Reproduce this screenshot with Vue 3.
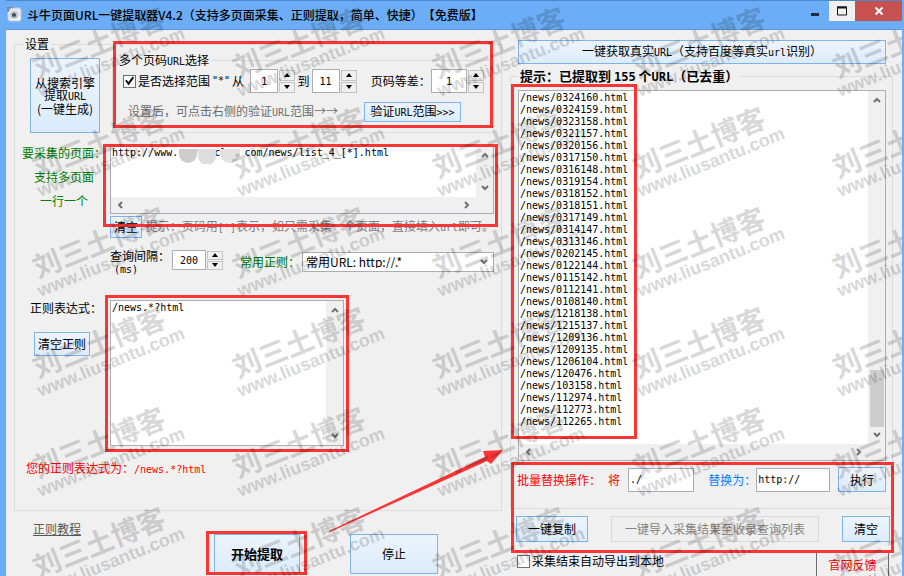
<script setup>
import { ref } from 'vue'

const useRange = ref(true)
const autoExport = ref(false)
const from = ref(1)
const to = ref(11)
const step = ref(1)
const interval = ref(200)
const pages = ref('http://www.r     cl   com/news/list_4_[*].html')
const pattern = ref('/news.*?html')
const preset = ref('any')
const search = ref('./')
const replacement = ref('http://')

const ids = [
  '0324160', '0324159', '0323158', '0321157', '0320156', '0317150', '0316148',
  '0319154', '0318152', '0318151', '0317149', '0314147', '0313146', '0202145',
  '0122144', '0115142', '0112141', '0108140', '1218138', '1215137', '1209136',
  '1209135', '1206104', '120476', '103158', '112974', '112773', '112265',
]
const results = ref(ids.map((id) => `/news/${id}.html`).join('\n'))
</script>

<template>
  <div class="window">
    <header class="titlebar">
      <svg class="app-icon" viewBox="0 0 15 15" aria-hidden="true">
        <rect x="1" y="1" width="13" height="13" rx="2" fill="#e4e8ee" stroke="#c3ccd8" />
        <path d="M0 0h7L2 5H0z" fill="#7e8a99" />
        <path d="M2 3l3-2M1 6l4-4" stroke="#f5f5f5" stroke-width="1" />
        <circle cx="7" cy="8" r="4" fill="#bcc6d1" />
        <circle cx="7" cy="8" r="2" fill="#39475a" />
        <path d="M3 12h8l2-3v4H4z" fill="#fff" />
      </svg>
      <h1>斗牛页面URL一键提取器V4.2（支持多页面采集、正则提取，简单、快捷）【免费版】</h1>
      <div class="caption">
        <button class="min" aria-label="最小化"><svg viewBox="0 0 10 10"><path d="M1 8.500h8" stroke="#1c2b3d" stroke-width="3" /></svg></button>
        <button class="max" aria-label="最大化"><svg viewBox="0 0 10 10"><path d="M.5 1h9v8h-9z" fill="none" stroke="#111" /><path d="M0 1.500h10" stroke="#111" stroke-width="2" /></svg></button>
        <button class="close" aria-label="关闭"><svg viewBox="0 0 10 10"><path d="M1.500 1.500l7 7M8.500 1.500l-7 7" stroke="#fff" stroke-width="2" /></svg></button>
      </div>
    </header>

    <main class="body">
      <section class="left">
        <fieldset class="group settings">
          <legend>设置</legend>

          <div class="row range-row">
            <button class="btn engine">从搜索引擎<br />提取<span class="en">URL</span><br />(一键生成)</button>
            <fieldset class="group range">
              <legend>多个页码<span class="en">URL</span>选择</legend>
              <div class="controls">
                <label class="check"><input v-model="useRange" type="checkbox" />是否选择范围<span class="en">"*"</span>从</label>
                <div class="spin">
                  <input v-model="from" type="number" aria-label="起始页码" />
                  <span class="arrows">
                    <button aria-label="增加"><svg viewBox="0 0 6 4"><path d="M0 4l3-4 3 4z" /></svg></button>
                    <button aria-label="减少"><svg viewBox="0 0 6 4"><path d="M0 0l3 4 3-4z" /></svg></button>
                  </span>
                </div>
                <span>到</span>
                <div class="spin">
                  <input v-model="to" type="number" aria-label="结束页码" />
                  <span class="arrows">
                    <button aria-label="增加"><svg viewBox="0 0 6 4"><path d="M0 4l3-4 3 4z" /></svg></button>
                    <button aria-label="减少"><svg viewBox="0 0 6 4"><path d="M0 0l3 4 3-4z" /></svg></button>
                  </span>
                </div>
                <label class="step" for="step">页码等差：</label>
                <div class="spin wide">
                  <input id="step" v-model="step" type="number" />
                  <span class="arrows">
                    <button aria-label="增加"><svg viewBox="0 0 6 4"><path d="M0 4l3-4 3 4z" /></svg></button>
                    <button aria-label="减少"><svg viewBox="0 0 6 4"><path d="M0 0l3 4 3-4z" /></svg></button>
                  </span>
                </div>
              </div>
              <div class="verify">
                <span>设置后，可点击右侧的验证<span class="en">URL</span>范围→→</span>
                <button class="btn">验证<span class="en">URL</span>范围<span class="en">&gt;&gt;&gt;</span></button>
              </div>
              <i class="mark mark-range"></i>
            </fieldset>
          </div>

          <div class="row pages-row">
            <label class="side green" for="pages">要采集的页面：<br />支持多页面<br />一行一个</label>
            <div class="memo">
              <textarea id="pages" v-model="pages" wrap="off" spellcheck="false"></textarea>
              <div class="vbar">
                <svg viewBox="0 0 8 6"><path d="M1 5l3-3 3 3" /></svg>
                <svg viewBox="0 0 8 6"><path d="M1 1l3 3 3-3" /></svg>
              </div>
              <div class="hbar">
                <svg viewBox="0 0 6 8"><path d="M5 1L2 4l3 3" /></svg>
                <svg viewBox="0 0 6 8"><path d="M1 1l3 3-3 3" /></svg>
              </div>
              <svg class="smudge" viewBox="0 0 70 18" aria-hidden="true">
                <path d="M2 3h18v5a9 9 0 0 1-18 0z" fill="#ccc" />
                <path d="M20 3h19v7a9 9 0 0 1-18 0z" fill="#ddd" />
                <path d="M43 3h20v5a9 8 0 0 1-20 0z" fill="#e2e2e2" />
              </svg>
              <i class="mark mark-pages"></i>
            </div>
          </div>

          <div class="row clear-row">
            <button class="btn">清空</button>
            <span>提示：页码用<span class="en">[*]</span>表示，如只需采集一个页面，直接填入<span class="en">url</span>即可。</span>
          </div>

          <div class="row interval-row">
            <label class="interval" for="interval">查询间隔：<br /><span class="en">(ms)</span></label>
            <div class="spin delay">
              <input id="interval" v-model="interval" type="number" />
              <span class="arrows">
                <button aria-label="增加"><svg viewBox="0 0 6 4"><path d="M0 4l3-4 3 4z" /></svg></button>
                <button aria-label="减少"><svg viewBox="0 0 6 4"><path d="M0 0l3 4 3-4z" /></svg></button>
              </span>
            </div>
            <label class="green" for="preset">常用正则：</label>
            <div class="combo">
              <select id="preset" v-model="preset">
                <option value="any">常用URL: http://.*</option>
              </select>
              <svg viewBox="0 0 8 6"><path d="M1 1l3 3 3-3" /></svg>
            </div>
          </div>

          <div class="row regex-row">
            <div class="side regex-side">
              <label for="pattern">正则表达式：</label>
              <button class="btn">清空正则</button>
            </div>
            <div class="memo regex">
              <textarea id="pattern" v-model="pattern" wrap="off" spellcheck="false"></textarea>
              <div class="vbar">
                <svg viewBox="0 0 8 6"><path d="M1 5l3-3 3 3" /></svg>
                <svg viewBox="0 0 8 6"><path d="M1 1l3 3 3-3" /></svg>
              </div>
              <i class="mark mark-regex"></i>
            </div>
          </div>

          <p class="current">您的正则表达式为：<span class="en">/news.*?html</span></p>
        </fieldset>

        <div class="actions">
          <a href="#">正则教程</a>
          <div class="start">
            <button class="btn big strong">开始提取</button>
            <i class="mark mark-start"></i>
          </div>
          <button class="btn big">停止</button>
        </div>
      </section>

      <section class="right">
        <button class="btn real">一键获取真实<span class="en">URL</span>（支持百度等真实<span class="en">url</span>识别）</button>
        <fieldset class="group output">
          <legend>提示：已提取到 <span class="en">155</span> 个<span class="en">URL</span>（已去重）</legend>
          <div class="memo list">
            <textarea v-model="results" wrap="off" spellcheck="false" aria-label="提取结果"></textarea>
            <div class="vbar">
              <svg viewBox="0 0 8 6"><path d="M1 5l3-3 3 3" /></svg>
              <span class="thumb"></span>
              <svg viewBox="0 0 8 6"><path d="M1 1l3 3 3-3" /></svg>
            </div>
            <div class="hbar">
              <svg viewBox="0 0 6 8"><path d="M5 1L2 4l3 3" /></svg>
              <svg viewBox="0 0 6 8"><path d="M1 1l3 3-3 3" /></svg>
            </div>
            <i class="mark mark-list"></i>
          </div>
          <div class="replace">
            <label class="red" for="search"><span>批量替换操作：</span><span>将</span></label>
            <input id="search" v-model="search" class="field" type="text" />
            <label class="blue" for="replacement">替换为：</label>
            <input id="replacement" v-model="replacement" class="field long" type="text" />
            <button class="btn">执行</button>
          </div>
        </fieldset>
        <div class="tools">
          <button class="btn copy">一键复制</button>
          <button class="btn import" disabled>一键导入采集结果至收录查询列表</button>
          <button class="btn clear">清空</button>
          <i class="mark mark-tools"></i>
        </div>
        <div class="export">
          <label class="check"><input v-model="autoExport" type="checkbox" />采集结束自动导出到本地</label>
          <button class="feedback">官网反馈</button>
        </div>
      </section>
    </main>

    <svg class="pointer" viewBox="0 0 174 84" aria-hidden="true">
      <path d="M0 82L156 8 154 2 174 1 162 15 158 12 1 83z" fill="#f93535" />
    </svg>

    <div class="watermarks" aria-hidden="true">
      <div v-for="n in 30" :key="n" class="tile">
        <div class="stamp"><b>刘三土博客</b><span>www.liusantu.com</span></div>
      </div>
    </div>
  </div>
</template>

<style>
body {
  margin: 0;
  background: #f0f0f0;
}
</style>

<style scoped>
* {
  box-sizing: border-box;
}
.window {
  position: relative;
  min-height: 100vh;
  border: solid #6badf6;
  border-width: 0 2px 0 6px;
  background: #f0f0f0;
  color: #000;
  font: 12px/12px "Noto Sans CJK SC", sans-serif;
  text-spacing-trim: space-all;
  overflow: hidden;
}
button, input, select, textarea {
  margin: 0;
  border-radius: 0;
  color: inherit;
  font: inherit;
  text-spacing-trim: space-all;
}
button {
  padding: 0;
  white-space: nowrap;
}
.en, textarea, .spin input, .field {
  font-family: "DejaVu Sans Mono", monospace;
  font-size: 10px;
}
.titlebar {
  display: flex;
  height: 30px;
  margin: 0 0 0 -6px;
  padding-left: 7px;
  border-top: 1px solid #4f88c8;
  border-bottom: 1px solid #5c97dc;
  background: #6badf6;
}
.app-icon {
  width: 15px;
  height: 15px;
  margin-top: 6px;
}
h1 {
  flex: 1;
  margin: 0 0 0 5px;
  font-size: 12px;
  font-weight: 500;
  line-height: 28px;
  white-space: nowrap;
}
.caption {
  display: flex;
  height: 20px;
}
.caption button {
  display: grid;
  place-items: center;
  border: 0;
}
.caption svg {
  width: 10px;
  height: 10px;
}
.min {
  width: 28px;
  background: none;
}
.max {
  width: 26px;
  background: #f0f0f0;
}
.close {
  width: 47px;
  background: #c75050;
}
.body {
  display: grid;
  grid-template-columns: minmax(0, 488fr) minmax(0, 383fr);
  gap: 8px;
  padding: 6px 9px 0 8px;
}
.group {
  position: relative;
  min-width: 0;
  margin: 0;
  padding: 0;
  border: 1px solid #dcdcdc;
}
legend {
  margin-left: 8px;
  padding: 0 2px;
  line-height: 16px;
}
.row {
  display: flex;
  padding-right: 7px;
}
.btn {
  border: 1px solid #7eb4ea;
  background: linear-gradient(#ecf4fc, #dcecfc);
}
.btn:disabled {
  border-color: #d9d9d9;
  background: #efefef;
  color: #838383;
}
.green {
  color: #008000;
}
.red {
  color: #f00;
}
.blue {
  color: #0080ff;
}
.engine {
  width: 70px;
  height: 75px;
  margin: 6px 12px 0 15px;
  line-height: 12px;
}
.range {
  flex: 1;
}
.range legend {
  height: 16px;
  margin-left: 4px;
}
.controls, .verify {
  display: flex;
  align-items: center;
}
.controls {
  justify-content: space-between;
  height: 24px;
  margin-top: 1px;
  padding: 0 9px 0 10px;
}
.check {
  display: flex;
  align-items: center;
  gap: 2px;
  white-space: nowrap;
}
.check input {
  flex: none;
  width: 13px;
  height: 13px;
  border: 1px solid #707070;
  background: #fff;
  appearance: none;
}
.check input:checked::before {
  content: "";
  display: block;
  height: 11px;
  background: #111;
  clip-path: polygon(10% 48%, 24% 38%, 40% 60%, 78% 10%, 92% 20%, 42% 90%);
}
.controls .check {
  margin-right: 4px;
}
.spin {
  display: flex;
  gap: 1px;
}
.spin input {
  width: 28px;
  height: 24px;
  padding: 0;
  border: 1px solid #abadb3;
  background: #fff;
  text-align: center;
  appearance: textfield;
}
.spin input::-webkit-inner-spin-button {
  display: none;
}
.spin.wide input {
  width: 36px;
}
.spin.delay input {
  width: 34px;
  height: 20px;
}
.arrows {
  display: flex;
  flex-direction: column;
  justify-content: center;
  gap: 1px;
}
.arrows button {
  display: grid;
  place-items: center;
  width: 16px;
  height: 11px;
  border: 1px solid #c4c4c4;
  background: #f0f0f0;
}
.delay .arrows button {
  height: 9px;
}
.arrows svg {
  width: 6px;
  height: 4px;
}
.step {
  width: 58px;
  margin-left: 12px;
  white-space: nowrap;
}
.verify {
  justify-content: space-between;
  height: 20px;
  margin: 9px 0 8px;
  padding: 0 32px 0 15px;
  color: #6d6d6d;
}
.verify .btn {
  width: 97px;
  height: 20px;
  color: #000;
}
.side {
  flex: none;
  width: 95px;
}
.pages-row {
  margin-top: 12px;
}
.pages-row .side {
  height: 69px;
  margin-top: -4px;
  padding-left: 3px;
  line-height: 24px;
  text-align: center;
  white-space: nowrap;
}
.memo {
  position: relative;
  display: grid;
  flex: 1;
  grid-template-columns: minmax(0, 1fr) 17px;
  grid-template-rows: minmax(0, 1fr) 16px;
  height: 69px;
  border: 1px solid #abadb3;
  background: #fff;
}
.memo textarea {
  width: 100%;
  height: 100%;
  padding: 1px;
  border: 0;
  background: #fff;
  line-height: 12px;
  white-space: pre;
  resize: none;
  outline: 0;
  overflow: hidden;
}
.vbar, .hbar {
  display: flex;
  align-items: center;
  justify-content: space-between;
  background: #f0f0f0;
}
.vbar {
  flex-direction: column;
  padding: 6px 0;
}
.hbar {
  grid-column: 1 / -1;
  padding: 0 23px 0 6px;
}
.vbar svg, .hbar svg, .combo svg {
  fill: none;
  stroke: #707070;
  stroke-width: 2;
}
.vbar svg, .combo svg {
  width: 8px;
  height: 6px;
}
.hbar svg {
  width: 6px;
  height: 8px;
}
.smudge {
  position: absolute;
  top: 0;
  left: 66px;
  width: 70px;
  height: 18px;
}
.clear-row {
  align-items: center;
  gap: 4px;
  margin-top: 2px;
  padding-left: 95px;
  color: #808080;
  white-space: nowrap;
}
.clear-row .btn {
  width: 32px;
  height: 22px;
  color: #000;
}
.interval-row {
  align-items: flex-start;
  height: 23px;
  margin-top: 12px;
  padding-left: 95px;
}
.interval {
  width: 62px;
  white-space: nowrap;
}
.interval .en {
  margin-left: 4px;
}
.interval-row .green {
  margin-left: 17px;
  line-height: 24px;
}
.combo {
  position: relative;
  flex: 1;
  height: 20px;
  margin: 2px 0 0 2px;
}
.combo select {
  width: 100%;
  height: 100%;
  padding: 0 20px 0 3px;
  border: 1px solid #abadb3;
  background: #fff;
  appearance: none;
}
.combo svg {
  position: absolute;
  top: 7px;
  right: 6px;
}
.regex-row {
  margin-top: 27px;
}
.regex-side {
  display: flex;
  flex-direction: column;
  align-items: flex-start;
  gap: 18px;
  padding: 2px 0 0 15px;
}
.regex-side .btn {
  width: 56px;
  height: 24px;
  margin-left: 4px;
}
.regex {
  flex: 0 1 234px;
  grid-template-rows: minmax(0, 1fr);
  height: 146px;
}
.current {
  margin: 12px 0 30px 11px;
  color: #f00;
  line-height: 20px;
}
.actions {
  display: flex;
  align-items: flex-start;
  margin-top: 8px;
}
.actions a {
  width: 200px;
  padding-left: 19px;
  color: #555;
  line-height: 20px;
}
.actions .btn {
  margin-top: 15px;
}
.start {
  position: relative;
  margin-right: 50px;
}
.big {
  width: 88px;
  height: 40px;
}
.start .big {
  width: 86px;
  font-size: 13px;
  font-weight: 700;
}
.right {
  display: flex;
  flex-direction: column;
}
.real {
  height: 24px;
  margin: 4px 7px 4px 8px;
}
.output legend {
  height: 16px;
  margin-left: 7px;
  font-size: 13px;
  font-weight: 700;
}
.output .en {
  font-size: 12px;
}
.list {
  height: 371px;
  margin: 6px 6px 0 7px;
}
.list .thumb {
  width: 14px;
  height: 57px;
  margin: auto 0 5px;
  background: #cdcdcd;
}
.replace {
  display: flex;
  align-items: center;
  margin: 6px 6px 16px;
  white-space: nowrap;
}
.replace .red {
  display: flex;
  gap: 7px;
  width: 111px;
}
.replace .blue {
  width: 48px;
  margin-left: 14px;
}
.field {
  flex: 66;
  min-width: 0;
  height: 24px;
  padding: 0 1px;
  border: 1px solid #abadb3;
  background: #fff;
}
.field.long {
  flex: 74;
}
.replace .btn {
  width: 48px;
  height: 25px;
  margin-left: 8px;
}
.tools {
  position: relative;
  display: flex;
  justify-content: space-between;
  margin: 7px 3px 0 6px;
}
.tools .btn {
  height: 26px;
}
.copy {
  width: 72px;
}
.import {
  width: 208px;
}
.clear {
  width: 48px;
}
.export {
  display: flex;
  align-items: flex-start;
  justify-content: space-between;
  margin: 10px 4px 0 7px;
}
.export .check {
  line-height: 18px;
}
.feedback {
  width: 73px;
  height: 24px;
  border: 1px solid #6b6b6b;
  border-bottom: 0;
  background: #f0f0f0;
  color: #f00;
}

/* Red call-out frames laid over the panels */
.mark {
  position: absolute;
  border: 3px solid #f93535;
  pointer-events: none;
}
.mark-range {
  inset: -27px 0 4px 0;
}
.mark-pages {
  inset: -2px -5px -14px -8px;
}
.mark-regex {
  inset: -6px -6px -7px -6px;
}
.mark-start {
  inset: 12px -7px -1px -8px;
}
.mark-list {
  inset: -7px auto 21px -8px;
  width: 126px;
}
.mark-tools {
  inset: -54px -4px -11px -5px;
}
.pointer {
  position: absolute;
  top: 449px;
  left: 323px;
  width: 174px;
  height: 84px;
}

/* Repeating diagonal watermark */
.watermarks {
  position: absolute;
  inset: 0 auto 0 -6px;
  display: grid;
  grid-template-columns: repeat(5, 200px);
  grid-auto-rows: 100px;
  padding-left: 6px;
  pointer-events: none;
  color: #000;
  opacity: 0.15;
}
.tile {
  display: grid;
  place-items: center;
  padding-bottom: 2px;
}
.stamp {
  display: flex;
  flex-direction: column;
  transform: rotate(-22deg);
  white-space: nowrap;
}
.stamp b {
  padding-left: 5px;
  font-size: 28px;
  font-weight: 700;
  line-height: 28px;
}
.stamp span {
  font: 700 18px/20px "Liberation Sans", sans-serif;
}
</style>
